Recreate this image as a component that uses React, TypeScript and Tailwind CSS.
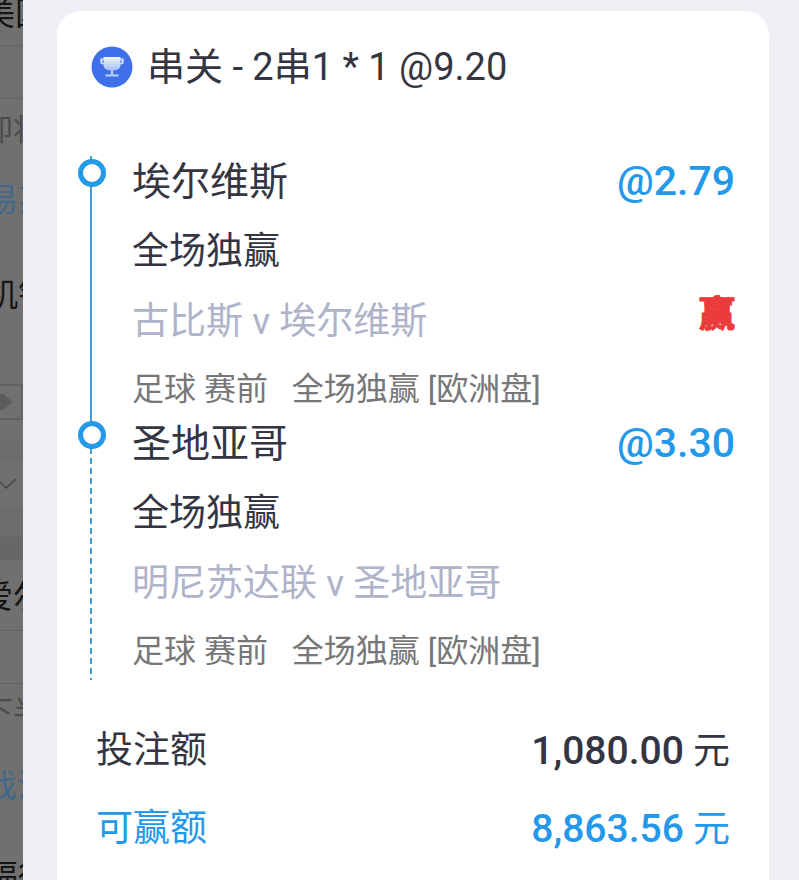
type Leg = {
  team: string
  odds: string
  market: string
  match: string
  detail: string
  won: boolean
}

const legs: Leg[] = [
  {
    team: '埃尔维斯',
    odds: '@2.79',
    market: '全场独赢',
    match: '古比斯 v 埃尔维斯',
    detail: '足球 赛前   全场独赢 [欧洲盘]',
    won: true,
  },
  {
    team: '圣地亚哥',
    odds: '@3.30',
    market: '全场独赢',
    match: '明尼苏达联 v 圣地亚哥',
    detail: '足球 赛前   全场独赢 [欧洲盘]',
    won: false,
  },
]

const TrophyIcon = () => (
  <svg viewBox="0 0 42 42" className="size-[42px] shrink-0" aria-hidden="true">
    <defs>
      <linearGradient id="cup" x1="0" y1="0" x2="0" y2="1">
        <stop offset="0" stopColor="#f1f5ff" />
        <stop offset="1" stopColor="#a9c2fb" />
      </linearGradient>
    </defs>
    <circle cx="21" cy="21" r="20.5" fill="#3f70ea" />
    <path
      d="M12.500 11h17v7.500c0 3.500-2.300 5.500-5.500 5.800h-6c-3.200-.3-5.500-2.300-5.500-5.800z"
      fill="url(#cup)"
    />
    <path d="M12.500 13.500h-2.200v3.200l2.200 1.300M29.500 13.500h2.200v3.200l-2.200 1.300" fill="none" stroke="#dbe6ff" strokeWidth="1.800" />
    <path d="M19.800 24h2.400v5h-2.400zM14.500 28.600h13v2h-13z" fill="#b9cdfc" />
  </svg>
)

// Dimmed page that stays visible beside the slip
const Backdrop = () => (
  <aside aria-hidden="true" className="w-[23px] shrink-0 overflow-hidden bg-[#707070] text-[32px] whitespace-nowrap text-[#151515]">
    <div className="flex h-[46px] justify-end border-b border-[#656565] leading-[28px]">
      <span className="-mr-[24px]">美国</span>
    </div>
    <div className="h-[53px] border-b border-[#656565]" />
    <div className="flex h-[60px] items-center justify-end text-[30px] text-[#4b4b50]">
      <span className="-mr-[20px]">即将</span>
    </div>
    <div className="flex h-[82px] items-center justify-end text-[#41688a]">
      <span className="-mr-[27px]">易某</span>
    </div>
    <div className="flex h-[108px] items-center justify-end">
      <span className="-mr-[27px]">机钱</span>
    </div>
    <div className="mt-[35px] flex h-[36px] items-center border-2 border-l-0 border-[#626262]">
      <svg viewBox="0 0 14 16" className="h-4 w-[14px]">
        <path d="M0 0h3l10 8-10 8H0z" fill="#5c5c5c" />
      </svg>
    </div>
    <div className="mt-5 h-5 bg-[#6c6c6c]" />
    <div className="flex h-[48px] items-center">
      <svg viewBox="0 0 17 12" className="h-3 w-[17px]">
        <path d="M0 4l6 6 10-9" fill="none" stroke="#454545" strokeWidth="1.500" />
      </svg>
    </div>
    <div className="h-[29px] bg-[#6c6c6c]" />
    <div className="h-[23px] bg-[#676768]" />
    <div className="flex h-[71px] items-center justify-end border-b border-[#626262] pt-1">
      <span className="-mr-[22px]">爱尔</span>
    </div>
    <div className="h-[53px] border-b border-[#626262]" />
    <div className="flex h-[54px] items-center justify-end text-[30px] text-[#4b4b50]">
      <span className="-mr-[20px]">下半</span>
    </div>
    <div className="flex h-[96px] items-center justify-end text-[#41688a]">
      <span className="-mr-[26px]">戏法</span>
    </div>
    <div className="flex h-[46px] justify-end leading-[84px]">
      <span className="-mr-[27px]">福得</span>
    </div>
  </aside>
)

const LegItem = ({ leg, last }: { leg: Leg; last: boolean }) => (
  <li className="relative pb-[6px] pl-[42px]">
    <span
      className={
        last
          ? 'absolute top-0 bottom-0 left-0 w-0.5 bg-[repeating-linear-gradient(#3e9ed8_0_6px,transparent_6px_10px)]'
          : 'absolute top-0 bottom-0 left-0 w-0.5 bg-[#3e9ed8]'
      }
    />
    <span className="absolute top-[3px] -left-3 size-[28px] rounded-full border-[5px] border-[#2499e9] bg-white" />
    <div className="flex h-[52px] items-center justify-between">
      <h2 className="text-[39px] text-[#333642]">{leg.team}</h2>
      <span className="text-[41px] font-medium text-[#2499e9]">{leg.odds}</span>
    </div>
    <p className="mt-[18px] text-[37px] leading-[52px] text-[#333642]">{leg.market}</p>
    <div className="mt-[18px] flex h-[52px] items-center justify-between">
      <p className="text-[37px] text-[#afb3ca]">{leg.match}</p>
      {leg.won && (
        <strong className="self-start text-[36px] leading-[38px] font-black text-[#e93c3b] [-webkit-text-stroke:1px_#e93c3b]">赢</strong>
      )}
    </div>
    <p className="mt-[18px] text-[32px] leading-[46px] whitespace-pre text-[#777777]">{leg.detail}</p>
  </li>
)

export default function App() {
  return (
    <div className="flex h-screen overflow-hidden bg-[#efeff5] font-[Roboto,'Noto_Sans_CJK_SC',sans-serif]">
      <Backdrop />
      <main className="mt-[11px] mr-[30px] ml-[34px] min-w-0 flex-1 rounded-t-[24px] bg-white pr-[34px] pl-[33px]">
        <header className="flex items-center gap-[14px] pt-[30px] pl-[1px]">
          <TrophyIcon />
          <h1 className="text-[38px] leading-[52px] text-[#333642]">串关 - 2串1 * 1 @9.20</h1>
        </header>
        <ul className="mt-[63px]">
          {legs.map((leg, i) => (
            <LegItem key={leg.team} leg={leg} last={i === legs.length - 1} />
          ))}
        </ul>
        <dl className="mt-[45px] pr-[5px] pl-[6px] text-[37px] text-[#333642]">
          <div className="flex h-[52px] items-center justify-between">
            <dt>投注额</dt>
            <dd>
              <span className="text-[39px] font-medium">1,080.00</span> 元
            </dd>
          </div>
          <div className="mt-[26px] flex h-[52px] items-center justify-between text-[#2499e9]">
            <dt>可赢额</dt>
            <dd>
              <span className="text-[39px] font-medium">8,863.56</span> 元
            </dd>
          </div>
        </dl>
      </main>
    </div>
  )
}
